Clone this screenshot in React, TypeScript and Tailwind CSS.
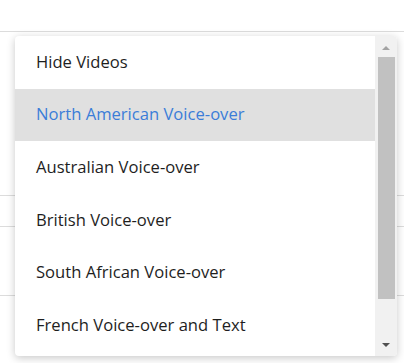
const options = [
  'Hide Videos',
  'North American Voice-over',
  'Australian Voice-over',
  'British Voice-over',
  'South African Voice-over',
  'French Voice-over and Text',
];

const selected = 1;

export default function App() {
  return (
    <div
      className="relative w-[404px] h-[363px] bg-white overflow-hidden"
      style={{ fontFamily: '"Open Sans", "Noto Sans", sans-serif' }}
    >
      {/* ── Page rows behind the menu ─────────────────────────────── */}
      <div className="h-[32px] border-b border-[#dcdcdc]" />
      <div className="h-[164px] border-b border-[#dcdcdc]" />
      <div className="h-[31px] border-b border-[#dcdcdc]" />
      <div className="h-[69px] border-b border-[#dcdcdc]" />

      {/* ── Open dropdown ─────────────────────────────────────────── */}
      <div className="absolute left-[15px] top-[36px] w-[382px] h-[320px] flex bg-white rounded-[4px] shadow-[0_2px_8px_rgba(0,0,0,0.22)] overflow-hidden">
        <ul className="flex-1 overflow-hidden">
          {options.map((o, i) => (
            <li
              key={o}
              className={
                i === selected
                  ? 'h-[52.6px] flex items-center pl-[21px] text-[16.6px] bg-[#e0e0e0] text-[#3b7dd8]'
                  : 'h-[52.6px] flex items-center pl-[21px] text-[16.6px] text-[#1e1e1e]'
              }
            >
              {o}
            </li>
          ))}
        </ul>

        {/* scrollbar */}
        <div className="w-[22px] bg-[#f1f1f1] flex flex-col items-center">
          <div className="h-[21px] flex items-center justify-center pt-[2px]">
            <div className="w-0 h-0 border-l-[4px] border-r-[4px] border-b-[4px] border-l-transparent border-r-transparent border-b-[#a3a3a3]" />
          </div>
          <div className="w-[17px] h-[242px] bg-[#c1c1c1]" />
          <div className="flex-1 flex items-end justify-center pb-[9px]">
            <div className="w-0 h-0 border-l-[4px] border-r-[4px] border-t-[4px] border-l-transparent border-r-transparent border-t-[#505050]" />
          </div>
        </div>
      </div>
    </div>
  );
}
